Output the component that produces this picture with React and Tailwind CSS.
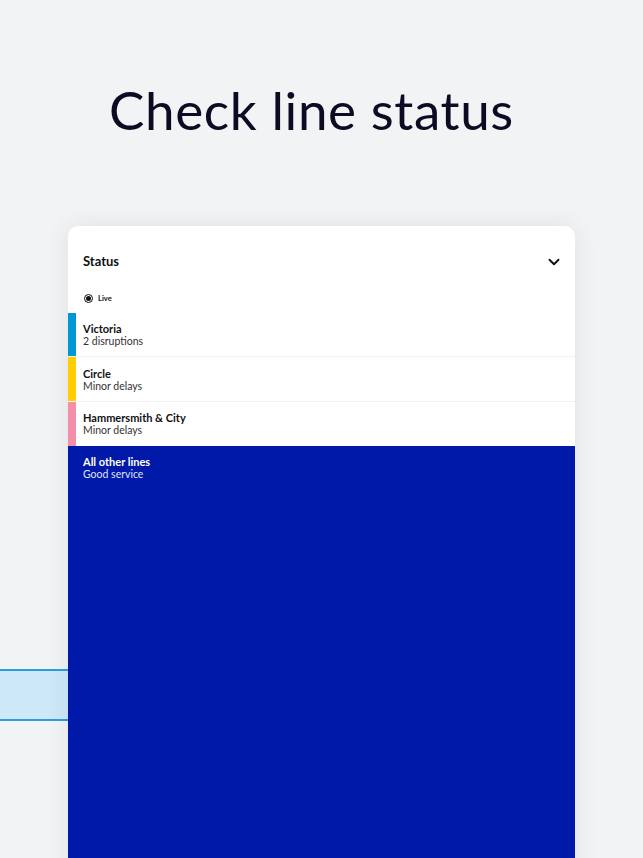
import { ChevronDown } from 'lucide-react'

const LINES = [
  { name: 'Victoria', status: '2 disruptions', color: 'bg-[#0098d4]' },
  { name: 'Circle', status: 'Minor delays', color: 'bg-[#ffcd00]' },
  { name: 'Hammersmith & City', status: 'Minor delays', color: 'bg-[#f38fa9]' }
]

function LineRow({ line, last }) {
  return (
    <div className={`flex ${last ? 'h-[44px]' : 'h-[44.5px] border-b border-[#f1f2f4]'}`}>
      <div className={`w-[8px] ${line.color}`} />
      <div className="flex flex-col justify-center pl-[7px] pt-[1px]">
        <div className="text-[11px] font-bold leading-[13px] text-[#111]">{line.name}</div>
        <div className="text-[10.5px] leading-[13px] text-[#333]">{line.status}</div>
      </div>
    </div>
  )
}

export default function App() {
  return (
    <div
      className="relative h-[858px] w-[643px] overflow-hidden bg-[#f2f3f5]"
      style={{ fontFamily: 'Lato, "Noto Sans", sans-serif' }}
    >
      <div className="absolute left-0 top-[669px] h-[52px] w-[80px] border-y-2 border-[#2b9fdb] bg-[#cde9f9]" />

      <h1 className="pt-[78px] pr-[20px] text-center text-[53px] font-normal leading-[64px] tracking-[0.6px] text-[#0b0c24]">
        Check line status
      </h1>

      <div className="relative mx-auto mt-[84px] flex h-[700px] w-[507px] flex-col overflow-hidden rounded-t-[10px] bg-white shadow-[0_0_24px_rgba(0,0,0,0.08)]">
        <div className="flex items-center justify-between pl-[15px] pr-[12px] pt-[26px]">
          <span className="text-[13px] font-bold text-[#111]">Status</span>
          <ChevronDown className="h-[18px] w-[18px] text-[#111]" strokeWidth={2.5} />
        </div>
        <div className="flex items-center gap-[5px] px-[16px] pt-[21px] pb-[9px]">
          <span className="flex h-[9px] w-[9px] items-center justify-center rounded-full border border-[#111]">
            <span className="h-[5px] w-[5px] rounded-full bg-[#111]" />
          </span>
          <span className="text-[7.5px] font-bold text-[#111]">Live</span>
        </div>
        {LINES.map((line, i) => (
          <LineRow key={line.name} line={line} last={i === LINES.length - 1} />
        ))}
        <div className="flex-1 bg-[#0019a8] px-[15px] pt-[9px]">
          <div className="text-[11px] font-bold leading-[13px] text-white">All other lines</div>
          <div className="text-[10.5px] leading-[13px] text-[#dfe4ff]">Good service</div>
        </div>
      </div>
    </div>
  )
}
